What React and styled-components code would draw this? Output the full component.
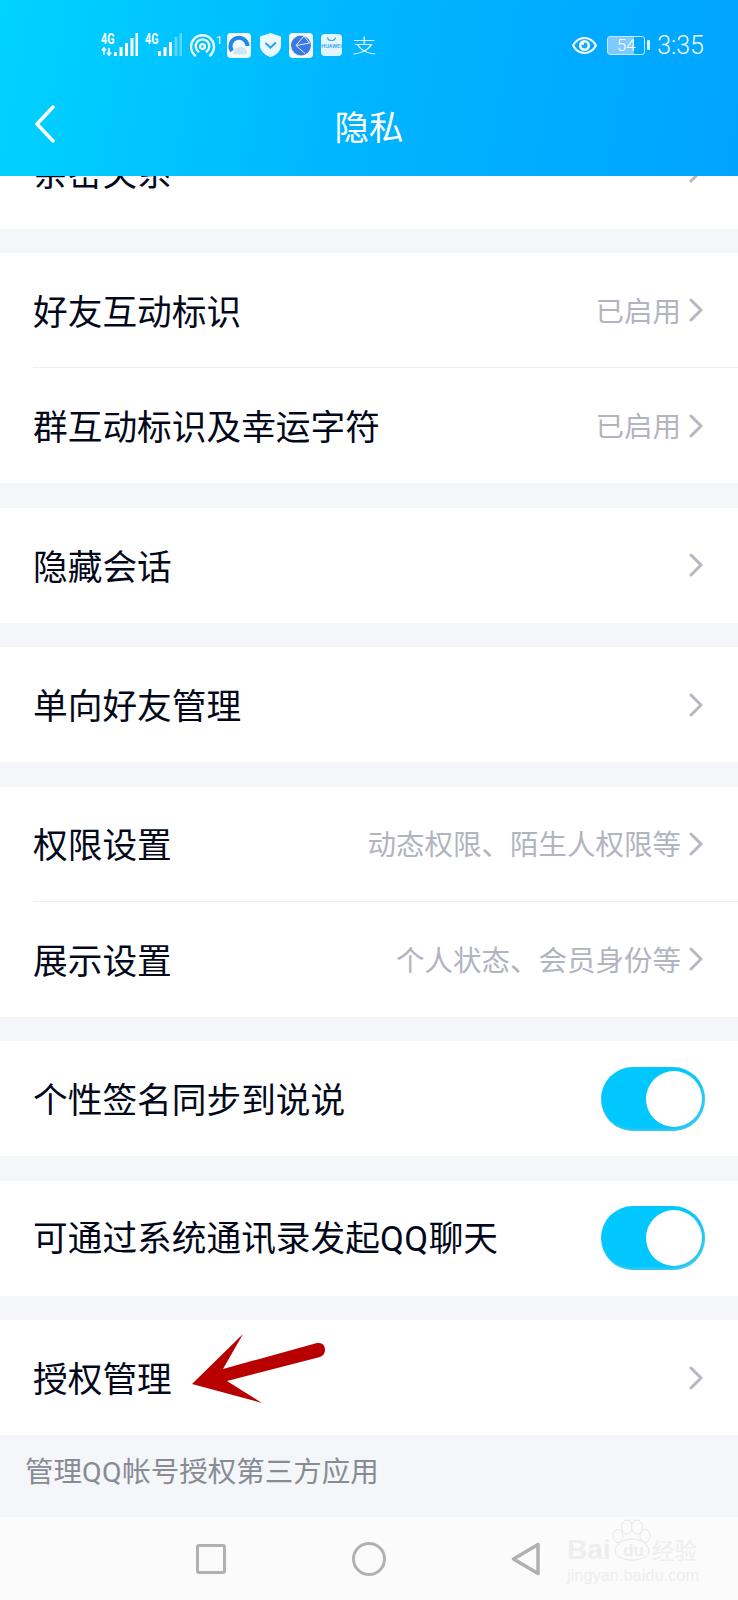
import React from "react"
import styled, { createGlobalStyle } from "styled-components"

const CJK = `"Noto Sans CJK SC", "Noto Sans", sans-serif`

const GlobalStyle = createGlobalStyle`
  html, body {
    margin: 0;
    padding: 0;
    background: #f5f6fa;
  }
  * {
    box-sizing: border-box;
  }
`

const Page = styled.div`
  position: relative;
  display: flex;
  flex-direction: column;
  width: 738px;
  height: 1600px;
  overflow: hidden;
  background: #f5f6fa;
  font-family: ${CJK};
`

const Header = styled.header`
  position: relative;
  z-index: 2;
  flex: none;
  height: 176px;
  background: linear-gradient(100deg, #00d3ff 0%, #00b4ff 50%, #00a4ff 100%);
  color: #fff;
`

const StatusBar = styled.div`
  display: flex;
  align-items: center;
  justify-content: space-between;
  height: 90px;
  padding: 0 34px 0 101px;
`

const StatusGroup = styled.div`
  display: flex;
  align-items: center;
`

const StatusIcon = styled.svg`
  flex: none;
  display: block;
  margin-left: ${(p) => p.$gap || 0}px;
`

const AlipayMark = styled.span`
  margin-left: 10px;
  width: 24px;
  font-size: 24px;
  line-height: 24px;
  font-weight: 300;
  color: #eafaff;
  transform: scaleY(0.82);
`

const Battery = styled.div`
  position: relative;
  width: 38px;
  height: 19px;
  margin: 0 12px 0 10px;
  border: 1.5px solid #c4e9ff;
  border-radius: 3px;
  background: linear-gradient(to right, #7fcbff 72%, transparent 72%);
  color: #fff;
  font: 300 17px/16px Roboto, sans-serif;
  text-align: center;
  &::after {
    content: "";
    position: absolute;
    right: -6px;
    top: 3px;
    width: 3px;
    height: 10px;
    border-radius: 1px;
    background: #d6f0ff;
  }
`

const Clock = styled.span`
  font: 300 25px/1 Roboto, sans-serif;
  color: #f2fbff;
`

const TitleBar = styled.div`
  position: relative;
  height: 72px;
  display: flex;
  align-items: center;
  justify-content: center;
`

const BackButton = styled.svg`
  position: absolute;
  left: 34px;
  top: 15px;
`

const Title = styled.h1`
  margin: 0 0 2px;
  font-size: 34.5px;
  line-height: 1;
  font-weight: 400;
`

const List = styled.main`
  display: flex;
  flex-direction: column;
  gap: 24.5px;
  margin-top: -62.5px;
`

const Group = styled.section`
  background: #fff;
`

const Row = styled.div`
  height: 115px;
  padding-left: 33px;
`

const RowInner = styled.div`
  display: flex;
  align-items: center;
  justify-content: space-between;
  height: 100%;
  padding-right: 33px;
  border-bottom: ${(p) => (p.$divider ? "1.5px solid #eeeff4" : "none")};
`

const Label = styled.span`
  font-size: 34.7px;
  line-height: 1;
  color: #03081a;
`

const Latin = styled.span`
  font-family: Roboto, sans-serif;
  letter-spacing: 0.5px;
`

const Detail = styled.div`
  display: flex;
  align-items: center;
  gap: 8px;
  padding-right: 2px;
`

const Hint = styled.span`
  font-size: 28.5px;
  line-height: 1;
  color: #b2b4bf;
`

const Chevron = styled.svg`
  display: block;
  flex: none;
`

const Toggle = styled.div`
  display: flex;
  align-items: center;
  justify-content: flex-end;
  width: 104px;
  height: 64px;
  padding-right: 3px;
  border-radius: 32px;
  background: #00c8ff;
  box-shadow: inset -2px -2px 3px rgba(130, 200, 225, 0.5);
`

const Knob = styled.div`
  width: 56px;
  height: 56px;
  border-radius: 50%;
  background: #fff;
`

const Footnote = styled.p`
  flex: none;
  height: 82px;
  margin: 0;
  padding: 19px 0 0 25px;
  font-size: 28.5px;
  line-height: 32px;
  color: #888b94;
`

const NavBar = styled.nav`
  position: absolute;
  left: 0;
  right: 0;
  bottom: 0;
  display: flex;
  align-items: center;
  gap: 125.5px;
  height: 83px;
  padding-left: 196px;
  background: #fbfbfb;
`

const NavSquare = styled.div`
  width: 30px;
  height: 30px;
  border: 3.5px solid #b1b1b1;
  border-radius: 3px;
`

const NavCircle = styled.div`
  width: 34px;
  height: 34px;
  border: 3.5px solid #b1b1b1;
  border-radius: 50%;
`

const PointerArrow = styled.svg`
  position: absolute;
  left: 188px;
  top: 1330px;
  z-index: 3;
`

const Watermark = styled.div`
  position: absolute;
  left: 567px;
  top: 1518px;
  z-index: 3;
  width: 134px;
  color: #edeeef;
`

const MarkTop = styled.div`
  display: flex;
  align-items: flex-end;
  height: 44px;
`

const MarkBai = styled.span`
  width: 45px;
  font: 700 28px/24px "Liberation Sans", sans-serif;
`

const MarkPaw = styled.div`
  position: relative;
  flex: none;
  width: 40px;
  height: 44px;
`

const MarkDu = styled.span`
  position: absolute;
  left: 11px;
  bottom: 1px;
  font: 700 17px/20px "Liberation Sans", sans-serif;
`

const MarkCn = styled.span`
  font-size: 22.5px;
  line-height: 25px;
  white-space: nowrap;
`

const MarkUrl = styled.div`
  margin-top: 3px;
  font: 400 16.4px/20px "Liberation Sans", sans-serif;
  white-space: nowrap;
`

const Bars = ({ tops, faint = 0 }) => {
  const xs = [0, 5.5, 11, 16.5, 21.5]
  return xs.map((x, i) => (
    <rect
      key={x}
      x={x}
      y={tops[i]}
      width="3"
      height={23 - tops[i]}
      fill="#fff"
      opacity={i >= xs.length - faint ? 0.35 : 1}
    />
  ))
}

const Signal = ({ gap, traffic, tops, faint }) => (
  <StatusIcon $gap={gap} width="37" height="30" viewBox="0 -3 37 30">
    <g transform="scale(0.74 1)">
      <text x="0" y="11" fontFamily="Roboto, sans-serif" fontWeight="700" fontSize="14.5" fill="#fff">4G</text>
    </g>
    {traffic && <path d="M3 22v-7M.8 17.5 3 15l2.200 2.500M8 15v7M5.800 19.500 8 22l2.200-2.500" stroke="#fff" strokeWidth="1.500" fill="none" />}
    <g transform="translate(13 0)">
      <Bars tops={tops} faint={faint} />
    </g>
  </StatusIcon>
)

const Hotspot = () => (
  <StatusIcon $gap={8} width="31" height="24" viewBox="0 0 31 24">
    <g fill="none" stroke="#eafaff" strokeWidth="2.400" strokeLinecap="round">
      <path d="M5 22.500a11.500 11.500 0 1 1 15 0" />
      <path d="M8.300 18.500a6.800 6.800 0 1 1 8.400 0" />
      <circle cx="12.500" cy="13.500" r="2.400" />
    </g>
    <text x="26" y="11" fontFamily="Roboto, sans-serif" fontSize="11" fontWeight="500" fill="#dff6ff">1</text>
  </StatusIcon>
)

const BrowserApp = () => (
  <StatusIcon $gap={6} width="24" height="25" viewBox="0 0 24 25">
    <rect width="24" height="25" rx="4" fill="#f2fbff" />
    <path d="M5 18a8.500 8.500 0 1 1 15.500-5" fill="none" stroke="#1f86ea" strokeWidth="4" />
    <path d="M6 21c1-5 5-8 9-7 3 .6 5 3 5 6 0 1-1 1.500-2 1.500H7z" fill="#cfe6f8" />
  </StatusIcon>
)

const Shield = () => (
  <StatusIcon $gap={9} width="21" height="24" viewBox="0 0 21 24">
    <path d="M10.500 0 21 3.500V12c0 6-4.500 10-10.500 12C4.500 22 0 18 0 12V3.500z" fill="#e9f8ff" />
    <path d="M6 10.500l4.500 4.200 4.800-4.700" fill="none" stroke="#2aa3e6" strokeWidth="2" strokeLinecap="round" />
  </StatusIcon>
)

const GlobeApp = () => (
  <StatusIcon $gap={8} width="24" height="25" viewBox="0 0 24 25">
    <rect width="24" height="25" rx="4" fill="#f5fcff" />
    <circle cx="12" cy="12.500" r="10" fill="#3a79e2" />
    <path d="M15 3 7 12.500l9 8M7 12.500 21 10M15 3l5.500 7" fill="none" stroke="#dcecff" strokeWidth="1" />
  </StatusIcon>
)

const StoreApp = () => (
  <StatusIcon $gap={8} width="21" height="22" viewBox="0 0 21 22">
    <rect width="21" height="22" rx="4" fill="#e3f6ff" />
    <path d="M6.500 3.500c.5 4 7.500 4 8 0" fill="none" stroke="#2aa3e6" strokeWidth="1.200" />
    <text x="10.500" y="14" textAnchor="middle" fontFamily="Roboto, sans-serif" fontWeight="500" fontSize="5.500" fill="#2aa3e6">HUAWEI</text>
  </StatusIcon>
)

const Eye = () => (
  <StatusIcon width="25" height="19" viewBox="0 0 25 19">
    <path d="M1 9.500C4 4.200 8 2 12.500 2S21 4.200 24 9.500C21 14.800 17 17 12.500 17S4 14.800 1 9.500z" fill="none" stroke="#fff" strokeWidth="2" />
    <circle cx="12.500" cy="9.500" r="5.500" fill="#fff" />
    <circle cx="12.500" cy="9.500" r="3" fill="#18a8f5" />
    <circle cx="10.800" cy="7.800" r="1.300" fill="#fff" />
  </StatusIcon>
)

const ChevronRight = () => (
  <Chevron width="14" height="24" viewBox="0 0 14 24">
    <path d="M2 2l10 10L2 22" fill="none" stroke="#b6b8c2" strokeWidth="3" strokeLinecap="round" strokeLinejoin="round" />
  </Chevron>
)

const groups = [
  [{ label: "亲密关系", chevron: true }],
  [
    { label: "好友互动标识", hint: "已启用", chevron: true },
    { label: "群互动标识及幸运字符", hint: "已启用", chevron: true },
  ],
  [{ label: "隐藏会话", chevron: true }],
  [{ label: "单向好友管理", chevron: true }],
  [
    { label: "权限设置", hint: "动态权限、陌生人权限等", chevron: true },
    { label: "展示设置", hint: "个人状态、会员身份等", chevron: true },
  ],
  [{ label: "个性签名同步到说说", toggle: true }],
  [{ label: <>可通过系统通讯录发起<Latin>QQ</Latin>聊天</>, toggle: true }],
  [{ label: "授权管理", chevron: true }],
]

export default function App() {
  return (
    <Page>
      <GlobalStyle />
      <Header>
        <StatusBar>
          <StatusGroup>
            <Signal traffic tops={[19, 14, 10, 5, 0]} />
            <Signal gap={7} tops={[18, 14, 9, 4, 0]} faint={2} />
            <Hotspot />
            <BrowserApp />
            <Shield />
            <GlobeApp />
            <StoreApp />
            <AlipayMark>支</AlipayMark>
          </StatusGroup>
          <StatusGroup>
            <Eye />
            <Battery>54</Battery>
            <Clock>3:35</Clock>
          </StatusGroup>
        </StatusBar>
        <TitleBar>
          <BackButton width="22" height="38" viewBox="0 0 22 38">
            <path d="M19 2 3 19l16 17" fill="none" stroke="#fff" strokeWidth="3.500" strokeLinecap="round" strokeLinejoin="round" />
          </BackButton>
          <Title>隐私</Title>
        </TitleBar>
      </Header>

      <List>
        {groups.map((rows, g) => (
          <Group key={g}>
            {rows.map((row, i) => (
              <Row key={i}>
                <RowInner $divider={i < rows.length - 1}>
                  <Label>{row.label}</Label>
                  {row.chevron && (
                    <Detail>
                      {row.hint && <Hint>{row.hint}</Hint>}
                      <ChevronRight />
                    </Detail>
                  )}
                  {row.toggle && (
                    <Toggle>
                      <Knob />
                    </Toggle>
                  )}
                </RowInner>
              </Row>
            ))}
          </Group>
        ))}
      </List>

      <Footnote>管理<Latin>QQ</Latin>帐号授权第三方应用</Footnote>

      <NavBar>
        <NavSquare />
        <NavCircle />
        <svg width="30" height="34" viewBox="0 0 30 34">
          <path d="M27 2.500 2.500 17 27 31.500z" fill="none" stroke="#b1b1b1" strokeWidth="3.500" strokeLinejoin="round" />
        </svg>
      </NavBar>

      <PointerArrow width="142" height="78" viewBox="188 1330 142 78">
        <path d="M192 1384 243 1334 223 1369 317 1343Q325 1342 325 1350 325 1355 320 1357L227 1381 262 1403Z" fill="#b80000" />
      </PointerArrow>

      <Watermark>
        <MarkTop>
          <MarkBai>Bai</MarkBai>
          <MarkPaw>
            <svg width="40" height="44" viewBox="0 0 40 44">
              <g fill="#fbfbfb" stroke="#e6e6e7" strokeWidth="1">
                <ellipse cx="15" cy="9" rx="5.500" ry="7" />
                <ellipse cx="25" cy="9" rx="5.500" ry="7" />
                <ellipse cx="6" cy="18" rx="5" ry="6.500" />
                <ellipse cx="33" cy="18" rx="5" ry="6.500" />
                <path d="M3 33c0-7 9-12 17-12s17 5 17 12c0 6-8 9-17 9S3 39 3 33z" />
              </g>
            </svg>
            <MarkDu>du</MarkDu>
          </MarkPaw>
          <MarkCn>经验</MarkCn>
        </MarkTop>
        <MarkUrl>jingyan.baidu.com</MarkUrl>
      </Watermark>
    </Page>
  )
}
